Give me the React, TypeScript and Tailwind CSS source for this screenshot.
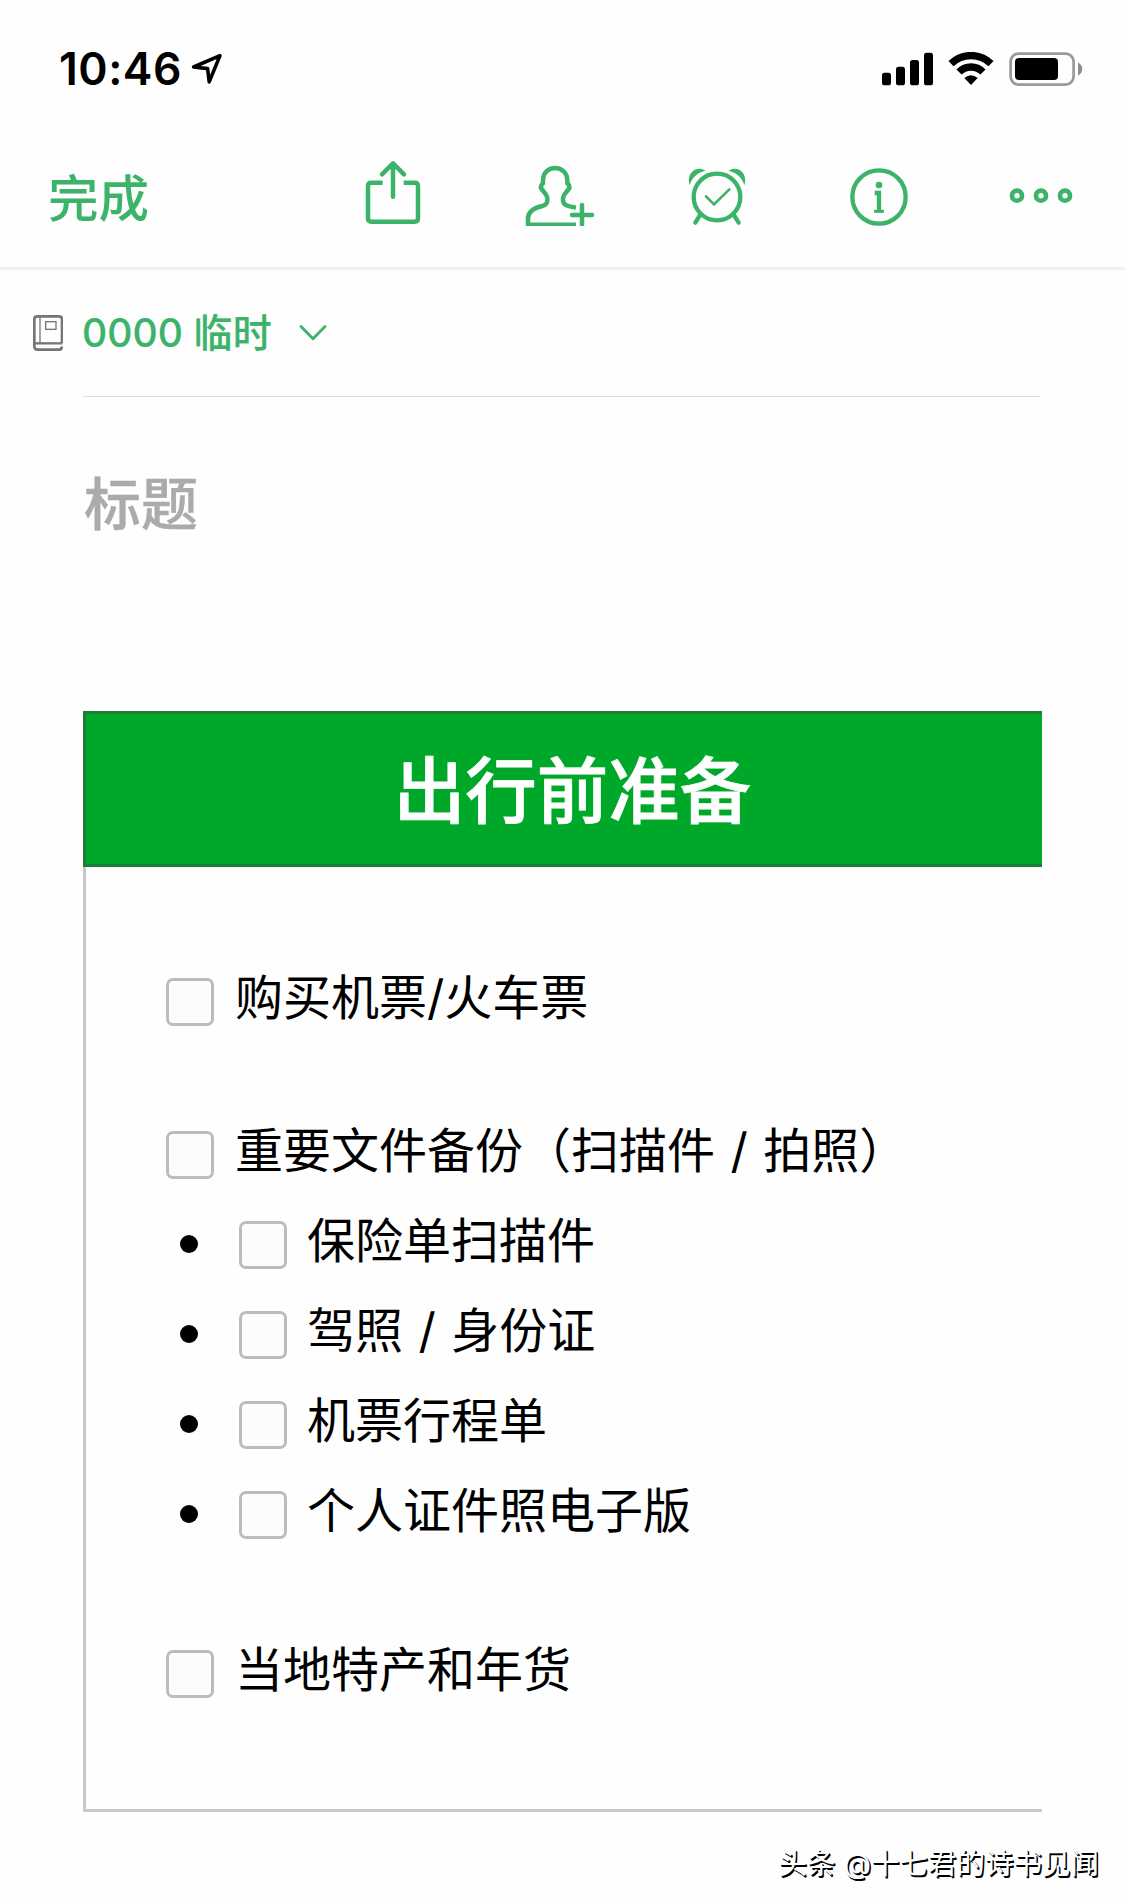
import React from 'react';

type ChecklistItem = {
  label: string;
  nested?: boolean;
  className: string; // Row offset from the previous row
};

const items: ChecklistItem[] = [
  { label: '购买机票/火车票', className: '' },
  { label: '重要文件备份（扫描件 / 拍照）', className: 'mt-[63px]' },
  { label: '保险单扫描件', nested: true, className: '' },
  { label: '驾照 / 身份证', nested: true, className: '' },
  { label: '机票行程单', nested: true, className: '' },
  { label: '个人证件照电子版', nested: true, className: '' },
  { label: '当地特产和年货', className: 'mt-[69px]' },
];

// --- Status bar icons ---
const LocationIcon: React.FC = () => (
  <svg className="ml-[9px] h-[34px] w-[34px]" viewBox="0 0 34 34" fill="none" stroke="currentColor" strokeWidth="3.6" strokeLinejoin="round">
    <path d="M29 3.6 2.6 15 16.6 16.6 18.2 29.9Z" />
  </svg>
);

const SignalIcon: React.FC = () => (
  <svg className="h-[34px] w-[51px]" viewBox="0 0 51 34" fill="currentColor">
    <rect x="0" y="20.7" width="9" height="12.6" rx="2.6" />
    <rect x="14" y="14.7" width="9" height="18.6" rx="2.6" />
    <rect x="28" y="8" width="9" height="25.3" rx="2.6" />
    <rect x="42" y="0.7" width="9" height="32.6" rx="2.6" />
  </svg>
);

const WifiIcon: React.FC = () => (
  <svg className="ml-[15px] h-[34px] w-[46px]" viewBox="0 0 138 102" fill="none" stroke="currentColor" strokeWidth="22">
    <path d="M9 35A86 86 0 0 1 129 35" />
    <path d="M33 60A51 51 0 0 1 105 60" />
    <path d="M69 99 49 78Q69 62 89 78Z" fill="currentColor" stroke="none" />
  </svg>
);

const BatteryIcon: React.FC = () => (
  <svg className="ml-[15px] h-[34px] w-[74px]" viewBox="0 0 74 34">
    <rect x="1.6" y="1.6" width="63" height="31" rx="8" fill="none" stroke="#999" strokeWidth="2.7" />
    <rect x="6" y="6" width="43" height="22" rx="4" />
    <path d="M69 10.5Q73.2 12.5 73.2 17T69 23.5Z" fill="#8c8c8c" />
  </svg>
);

// --- Toolbar icons ---
const ShareIcon: React.FC = () => (
  <svg className="ml-[216px] h-[66px] w-[58px]" viewBox="0 0 174 198" fill="none" stroke="currentColor" strokeWidth="13.5" strokeLinejoin="round">
    <path d="M56 68H22Q12 68 12 78V175Q12 185 22 185H152Q162 185 162 175V78Q162 68 152 68H119" />
    <path d="M87 110V12M54 43 87 10 120 43" strokeLinecap="round" />
  </svg>
);

const AddPersonIcon: React.FC = () => (
  <svg className="ml-[101px] h-[66px] w-[72px]" viewBox="0 0 216 198" fill="none" stroke="currentColor" strokeWidth="13.5">
    <path d="M159 194H15V176C15 152 34 143 58 138C74 134 74 124 73 114C71 101 61 96 54 84C53 79 54 75 60 70V62C60 38 76 24 96 24S133 38 133 62V70C139 75 140 79 139 84C132 96 122 101 120 114C118 136 130 138 159 143" />
    <path d="M147 165H207M177 135V194" strokeLinecap="round" />
  </svg>
);

const AlarmIcon: React.FC = () => (
  <svg className="ml-[92px] h-[66px] w-[60px]" viewBox="0 0 180 198" fill="none" stroke="currentColor">
    <circle cx="90" cy="111" r="70" strokeWidth="13" />
    <path d="M57 109 81 133 127 88" strokeWidth="8" strokeLinecap="round" />
    <path d="M38 167 25 188M142 167 155 188" strokeWidth="13" strokeLinecap="round" />
    <path d="M8 76C-4 38 29 14 56 32C34 37 15 50 8 76ZM172 76C184 38 151 14 124 32C146 37 165 50 172 76Z" fill="currentColor" stroke="none" />
  </svg>
);

const InfoIcon: React.FC = () => (
  <svg className="ml-[102px] h-[66px] w-[60px]" viewBox="0 0 180 198" fill="none" stroke="currentColor">
    <circle cx="90" cy="111" r="80" strokeWidth="13" />
    <circle cx="90" cy="75" r="10" fill="currentColor" stroke="none" />
    <path d="M77 99H90V154" strokeWidth="13" />
    <path d="M75 154H105" strokeWidth="9" />
  </svg>
);

const MoreIcon: React.FC = () => (
  <svg className="ml-[99px] h-[66px] w-[66px]" viewBox="0 0 198 198" fill="none" stroke="currentColor" strokeWidth="14">
    <circle cx="27" cy="107" r="15" />
    <circle cx="99" cy="107" r="15" />
    <circle cx="171" cy="107" r="15" />
  </svg>
);

// --- Notebook row icons ---
const NotebookIcon: React.FC = () => (
  <svg className="h-[36px] w-[30px] text-[#757575]" viewBox="0 0 90 108" fill="none" stroke="currentColor">
    <path d="M87 84V13Q87 4 78 4H13Q4 4 4 13V94Q4 104 14 104H78Q86 104 87 94" strokeWidth="8" />
    <path d="M5 85H88" strokeWidth="7" />
    <path d="M21 5V84" strokeWidth="4" />
    <rect x="38" y="20" width="31" height="23" strokeWidth="4" />
  </svg>
);

const ChevronIcon: React.FC = () => (
  <svg className="ml-[27px] h-[18px] w-[28px]" viewBox="0 0 28 18" fill="none" stroke="currentColor" strokeWidth="2.8" strokeLinecap="round" strokeLinejoin="round">
    <path d="M2 2.5 14 14.8 26 2.5" />
  </svg>
);

const ChecklistRow: React.FC<{ item: ChecklistItem }> = ({ item }) => (
  <li className={`flex h-[90px] items-center ${item.className}`}>
    {item.nested && <span className="mr-[41px] mb-[3px] ml-[14px] h-[18px] w-[18px] rounded-full bg-black" />}
    <span className="h-12 w-12 shrink-0 rounded-[7px] border-3 border-[#bcbcbc] bg-[#fcfcfe]" />
    <span className={`pb-[9px] text-[48px] leading-none whitespace-nowrap [word-spacing:2px] ${item.nested ? 'ml-[20px]' : 'ml-[21px]'}`}>
      {item.label}
    </span>
  </li>
);

const App: React.FC = () => {
  return (
    <div lang="zh-CN" className="flex h-[1904px] w-[1125px] flex-col overflow-hidden bg-[#fefefe] font-['Inter','Noto_Sans_CJK_SC',sans-serif] text-black">
      {/* Status bar */}
      <div className="flex h-[138px] shrink-0 items-center pr-[42px] pl-[59px]">
        <span className="text-[44.5px] leading-none font-semibold tracking-[0.5px]">10:46</span>
        <LocationIcon />
        <div className="ml-auto flex items-center">
          <SignalIcon />
          <WifiIcon />
          <BatteryIcon />
        </div>
      </div>

      {/* Toolbar */}
      <div className="flex h-[132px] shrink-0 items-center border-b-3 border-[#f0f0f0] pb-[19px] pl-12 text-[#3bb368]">
        <span className="w-[100px] pt-[12px] text-[50.5px] leading-none font-medium whitespace-nowrap">完成</span>
        <ShareIcon />
        <AddPersonIcon />
        <AlarmIcon />
        <InfoIcon />
        <MoreIcon />
      </div>

      {/* Notebook selector */}
      <div className="flex h-[126px] shrink-0 items-center pl-[33px] text-[#3bb368]">
        <NotebookIcon />
        <span className="ml-[19px] pb-px text-[39px] leading-none font-medium tracking-[0.1px] whitespace-nowrap [-webkit-text-stroke:0.2px]">0000 临时</span>
        <ChevronIcon />
      </div>
      <div className="mr-[85px] ml-[83px] h-px shrink-0 bg-[#dcdcdc]" />

      {/* Note title placeholder */}
      <div className="mt-[78px] ml-[84px] h-[60px] shrink-0 text-[57px] leading-[60px] font-medium text-[#ababab] [-webkit-text-stroke:0.4px]">标题</div>

      {/* Note table */}
      <div className="mt-[176px] mr-[83px] ml-[83px] shrink-0">
        <div className="flex h-[156px] items-center justify-center border-y-3 border-l-3 border-[#1d7d34] bg-[#00a82a] pt-[5px] pl-[17px] text-[71.5px] leading-none font-medium text-white [-webkit-text-stroke:0.8px]">
          出行前准备
        </div>
        <ul className="h-[945px] border-b-3 border-l-3 border-[#c9c9c9] pt-[90px] pl-20">
          {items.map((item) => (
            <ChecklistRow key={item.label} item={item} />
          ))}
        </ul>
      </div>

      {/* Watermark */}
      <div className="mt-[38px] mr-[26px] self-end text-[28.5px] leading-none whitespace-nowrap text-white [text-shadow:1.5px_1.5px_0_#000,1px_1px_0_#000]">
        头条 @十七君的诗书见闻
      </div>
    </div>
  );
};

export default App;
